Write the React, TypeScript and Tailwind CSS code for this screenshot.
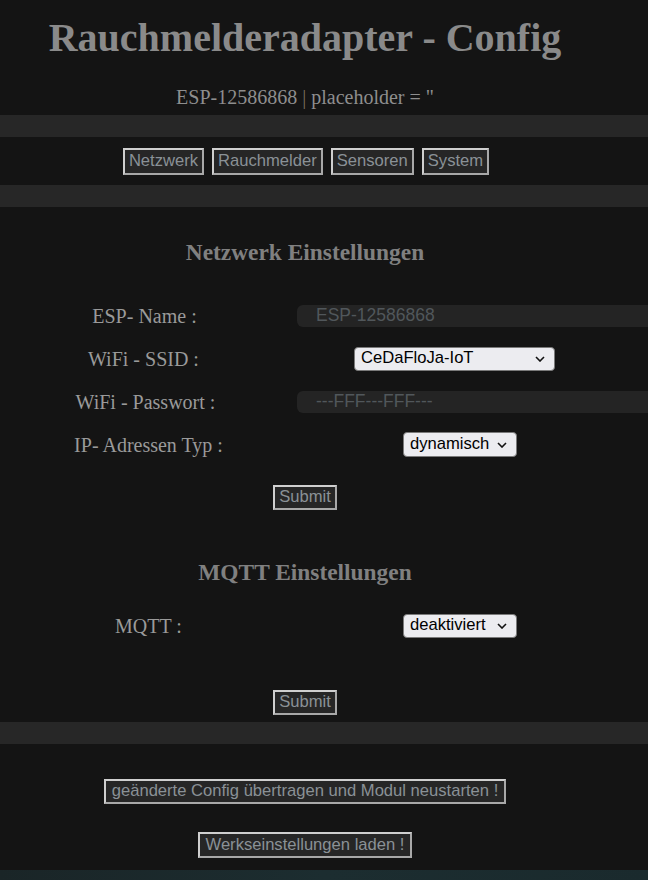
const serif = "font-['Liberation_Serif','Times_New_Roman',serif]";
const sans = "font-['Liberation_Sans',Arial,sans-serif]";

function Btn({ label, className = "" }: { label: string; className?: string }) {
  return (
    <button
      className={`${sans} text-[16.6px] leading-none px-[4px] border-2 border-[#cfcfcf] border-b-[#a8a8a8] border-r-[#a8a8a8] bg-[#262626] text-[#8a9196] flex items-center ${className}`}
    >
      {label}
    </button>
  );
}

function Chevron() {
  return (
    <svg width="10" height="6" viewBox="0 0 10 6" className="shrink-0">
      <path d="M1 1l4 4 4-4" fill="none" stroke="#111" strokeWidth="1.6" />
    </svg>
  );
}

function FakeSelect({ value, w, h = 24 }: { value: string; w: number; h?: number }) {
  return (
    <div
      className={`${sans} text-[16.6px] text-black bg-[#ececf0] border border-[#7a7a7a] rounded-[4px] flex items-center justify-between pl-[6px] pr-[9px]`}
      style={{ width: w, height: h }}
    >
      <span>{value}</span>
      <Chevron />
    </div>
  );
}

function Row({ label, children, labelClass = "" }: { label: string; children: React.ReactNode; labelClass?: string }) {
  return (
    <div className="grid grid-cols-[297px_326px] h-[43px] items-center">
      <div className={`text-center text-[20px] text-[#9a9a9a] ${labelClass}`}>{label}</div>
      <div className="flex justify-center">{children}</div>
    </div>
  );
}

function TextField({ value }: { value: string }) {
  return (
    <div className="w-full flex">
      <div className={`${sans} w-[420px] shrink-0 h-[22px] rounded-[6px] bg-[#242424] text-[17.5px] text-[#51575b] pl-[19px] flex items-center`}>
        {value}
      </div>
    </div>
  );
}

export default function App() {
  return (
    <div className={`${serif} w-[648px] h-[880px] overflow-hidden bg-[#141414] flex flex-col`}>
      {/* Header */}
      <div className="w-[610px] flex flex-col items-center">
        <h1 className="pt-[18px] text-[40px] leading-[40px] font-bold text-[#8a8a8a]">
          Rauchmelderadapter - Config
        </h1>
        <p className="mt-[29px] text-[20px] leading-[20px] text-[#8e8e8e]">
          ESP-12586868 <span className="text-[#7a6f5f]">|</span> placeholder = "
        </p>
      </div>

      <div className="mt-[8px] h-[22px] bg-[#272727]" />
      <div className="w-[612px] h-[48px] flex items-center justify-center gap-[8px]">
        <Btn label="Netzwerk" className="h-[27px]" />
        <Btn label="Rauchmelder" className="h-[27px]" />
        <Btn label="Sensoren" className="h-[27px]" />
        <Btn label="System" className="h-[27px]" />
      </div>
      <div className="h-[22px] bg-[#272727]" />

      {/* Netzwerk */}
      <h3 className="w-[610px] mt-[33px] text-center text-[23.4px] leading-[24px] font-bold text-[#808080]">
        Netzwerk Einstellungen
      </h3>
      <div className="mt-[30px] flex flex-col">
        <Row label="ESP- Name :" labelClass="pr-[8px]">
          <TextField value="ESP-12586868" />
        </Row>
        <Row label="WiFi - SSID :" labelClass="pr-[10px]">
          <div className="mr-[11px]">
            <FakeSelect value="CeDaFloJa-IoT" w={201} />
          </div>
        </Row>
        <Row label="WiFi - Passwort :" labelClass="pr-[6px]">
          <TextField value="---FFF---FFF---" />
        </Row>
        <Row label="IP- Adressen Typ :">
          <FakeSelect value="dynamisch" w={114} h={25} />
        </Row>
      </div>
      <div className="w-[610px] mt-[19px] flex justify-center">
        <Btn label="Submit" className="h-[25px]" />
      </div>

      {/* MQTT */}
      <h3 className="w-[610px] mt-[50px] text-center text-[23.4px] leading-[24px] font-bold text-[#808080]">
        MQTT Einstellungen
      </h3>
      <div className="mt-[20px]">
        <Row label="MQTT :">
          <FakeSelect value="deaktiviert" w={114} />
        </Row>
      </div>
      <div className="w-[610px] mt-[43px] flex justify-center">
        <Btn label="Submit" className="h-[25px]" />
      </div>

      <div className="mt-[7px] h-[22px] bg-[#272727]" />

      <div className="w-[610px] mt-[35px] flex justify-center">
        <Btn label="geänderte Config übertragen und Modul neustarten !" className="h-[25px] px-[6px]" />
      </div>
      <div className="w-[610px] mt-[28px] flex justify-center">
        <Btn label="Werkseinstellungen laden !" className="h-[26px] px-[6px]" />
      </div>

      <div className="mt-auto h-[10px] bg-gradient-to-r from-[#1a2527] via-[#1c2d30] to-[#1a2a2d]" />
    </div>
  );
}
